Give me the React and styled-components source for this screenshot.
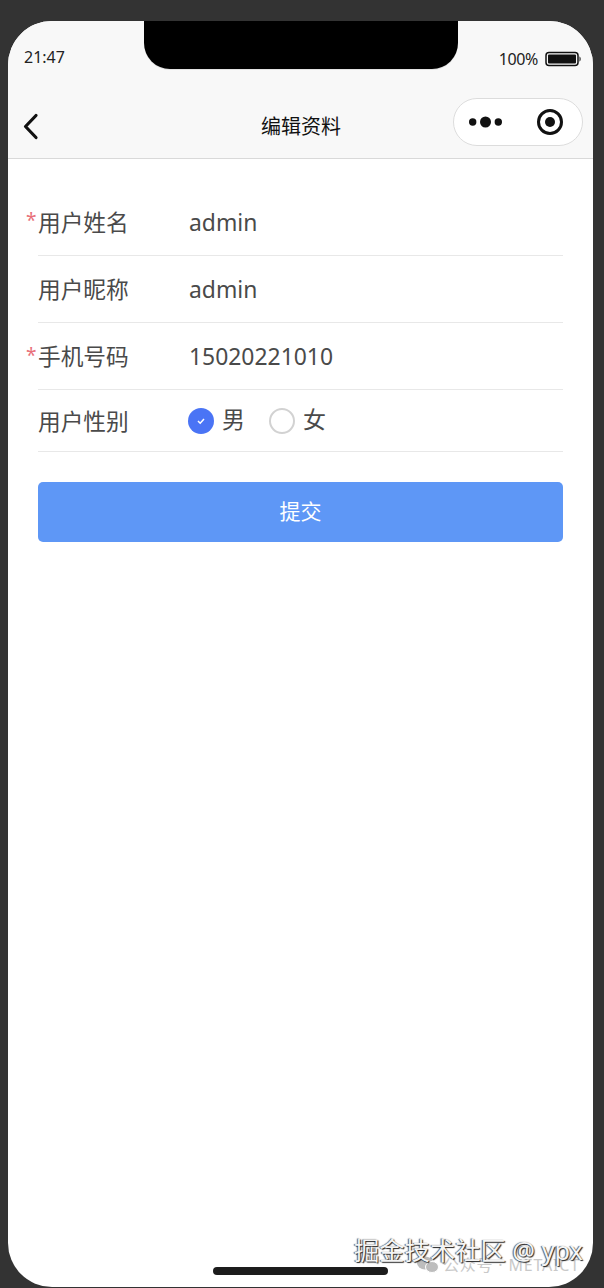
import React from "react"
import styled, { createGlobalStyle } from "styled-components"

const GlobalStyle = createGlobalStyle`
  html, body {
    margin: 0;
    padding: 0;
    background: #333333;
  }
  * {
    box-sizing: border-box;
  }
`

const FONT = `"Noto Sans", "Noto Sans CJK SC", sans-serif`

const Page = styled.div`
  width: 604px;
  height: 1288px;
  padding: 21px 11px 1px 8px;
  background: #333333;
  font-family: ${FONT};
  overflow: hidden;
`

const Phone = styled.div`
  position: relative;
  height: 1266px;
  border-radius: 44px;
  background: #ffffff;
  overflow: hidden;
`

const Notch = styled.div`
  position: absolute;
  top: 0;
  left: 136px;
  width: 314px;
  height: 48px;
  background: #000000;
  border-radius: 0 0 26px 26px;
  box-shadow: 0 1px 0 #e2e2e2;
`

const Top = styled.header`
  height: 138px;
  background: #f8f8f8;
  border-bottom: 1px solid #d9d9d9;
`

const StatusBar = styled.div`
  height: 69px;
  padding: 26px 12px 0 16px;
  display: flex;
  justify-content: space-between;
  align-items: flex-start;
  color: #222222;
`

const Time = styled.span`
  font-size: 16px;
  line-height: 20px;
`

const Power = styled.div`
  display: flex;
  align-items: center;
  gap: 7px;
  padding-top: 2px;
  font-size: 16px;
  line-height: 20px;
  letter-spacing: -0.4px;
`

const NavBar = styled.div`
  position: relative;
  height: 68px;
  display: flex;
  align-items: center;
  justify-content: center;
`

const Back = styled.svg`
  position: absolute;
  left: 14px;
  top: 23px;
`

const Title = styled.h1`
  margin: 6px 0 0 1px;
  font-size: 20px;
  line-height: 26px;
  font-weight: 400;
  color: #111111;
`

const Capsule = styled.div`
  position: absolute;
  right: 10px;
  top: 8px;
  width: 130px;
  height: 48px;
  padding: 0 18px 0 15px;
  display: flex;
  align-items: center;
  justify-content: space-between;
  background: #ffffff;
  border: 1px solid #dcdcdc;
  border-radius: 24px;
`

const Form = styled.main`
  padding: 29px 30px 0;
`

const Row = styled.div`
  position: relative;
  height: ${(props) => props.$height}px;
  display: flex;
  align-items: center;
  border-bottom: 1px solid #e8e8e8;
  color: #4a4a4a;
`

const Required = styled.span`
  position: absolute;
  left: -12px;
  top: 18px;
  color: #e8707a;
  font-size: 19px;
  line-height: 28px;
`

const Label = styled.label`
  width: 151px;
  padding-top: 2px;
  font-size: 22.7px;
  line-height: 30px;
`

const Value = styled.span`
  padding-top: 2px;
  font-size: 22.9px;
  line-height: 30px;
`

const Radios = styled.div`
  margin-left: -1px;
  display: flex;
  align-items: center;
  gap: 24px;
`

const Radio = styled.span`
  display: flex;
  align-items: center;
  gap: 8px;
  font-size: 23px;
  line-height: 30px;
`

const RadioText = styled.span`
  padding-bottom: 4px;
`

const Circle = styled.span`
  width: 26px;
  height: 26px;
  display: flex;
  align-items: center;
  justify-content: center;
  border-radius: 50%;
  background: ${(props) => (props.$checked ? "#4a74f5" : "#ffffff")};
  border: ${(props) => (props.$checked ? "none" : "2px solid #d2d2d2")};
`

const Submit = styled.button`
  display: block;
  width: 100%;
  height: 60px;
  margin-top: 30px;
  padding: 0 0 4px;
  border: none;
  border-radius: 5px;
  background: #5e97f6;
  color: #ffffff;
  font-family: ${FONT};
  font-size: 21px;
`

const HomeBar = styled.div`
  position: absolute;
  left: 205px;
  bottom: 12px;
  width: 175px;
  height: 8px;
  border-radius: 4px;
  background: #1c1c1c;
`

const Faint = styled.div`
  position: absolute;
  left: 409px;
  bottom: 13px;
  display: flex;
  align-items: center;
  gap: 4px;
  font-size: 16px;
  line-height: 18px;
  letter-spacing: 0.8px;
  white-space: nowrap;
  color: #c9c9c9;
`

const Mark = styled.div`
  position: absolute;
  right: 10px;
  bottom: 22px;
  font-size: 25.3px;
  line-height: 30px;
  white-space: nowrap;
  color: #f4f4f4;
  text-shadow: 1px 1px 1px #222222, -1px 0 1px #555555;
`

const fields = [
  { label: "用户姓名", value: "admin", required: true, height: 68 },
  { label: "用户昵称", value: "admin", height: 67 },
  { label: "手机号码", value: "15020221010", required: true, height: 67 },
]

function Battery() {
  return (
    <svg width="36" height="16" viewBox="0 0 36 16">
      <rect x="1" y="1.5" width="32" height="13" rx="3" fill="none" stroke="#111" strokeWidth="1.5" />
      <rect x="3" y="3.5" width="28" height="9" rx="1" fill="#111" />
      <path d="M34.5 5.5 C36 6 36 10 34.5 10.5 Z" fill="#111" />
    </svg>
  )
}

function Wechat() {
  return (
    <svg width="22" height="18" viewBox="0 0 22 18" fill="#bdbdbd">
      <ellipse cx="8" cy="7" rx="8" ry="6.5" />
      <ellipse cx="15" cy="11" rx="6.5" ry="5.5" stroke="#fff" />
    </svg>
  )
}

export default function App() {
  return (
    <Page>
      <GlobalStyle />
      <Phone>
        <Top>
          <StatusBar>
            <Time>21:47</Time>
            <Power>
              100%
              <Battery />
            </Power>
          </StatusBar>
          <NavBar>
            <Back width="20" height="28" viewBox="0 0 20 28" fill="none">
              <path d="M14 2.5 L3.5 13.5 L14 24.5" stroke="#111" strokeWidth="3.2" strokeLinecap="round" strokeLinejoin="round" />
            </Back>
            <Title>编辑资料</Title>
            <Capsule>
              <svg width="33" height="12" viewBox="0 0 33 12" fill="#111">
                <circle cx="3.7" cy="6" r="3.7" />
                <circle cx="16.5" cy="6" r="5.5" />
                <circle cx="29.3" cy="6" r="3.7" />
              </svg>
              <svg width="28" height="28" viewBox="0 0 28 28">
                <circle cx="14" cy="14" r="11.5" fill="none" stroke="#111" strokeWidth="3" />
                <circle cx="14" cy="14" r="5" fill="#111" />
              </svg>
            </Capsule>
          </NavBar>
        </Top>
        <Notch />
        <Form>
          {fields.map((field) => (
            <Row key={field.label} $height={field.height}>
              {field.required && <Required>*</Required>}
              <Label>{field.label}</Label>
              <Value>{field.value}</Value>
            </Row>
          ))}
          <Row $height={62}>
            <Label>用户性别</Label>
            <Radios>
              <Radio>
                <Circle $checked>
                  <svg width="10" height="10" viewBox="0 0 10 10" fill="none">
                    <path d="M2 5 L4.2 7.2 L8 3" stroke="#fff" strokeWidth="1.5" />
                  </svg>
                </Circle>
                <RadioText>男</RadioText>
              </Radio>
              <Radio>
                <Circle />
                <RadioText>女</RadioText>
              </Radio>
            </Radios>
          </Row>
          <Submit>提交</Submit>
        </Form>
        <HomeBar />
        <Faint>
          <Wechat />
          公众号 · METAICT
        </Faint>
        <Mark>掘金技术社区 @ ypx</Mark>
      </Phone>
    </Page>
  )
}
